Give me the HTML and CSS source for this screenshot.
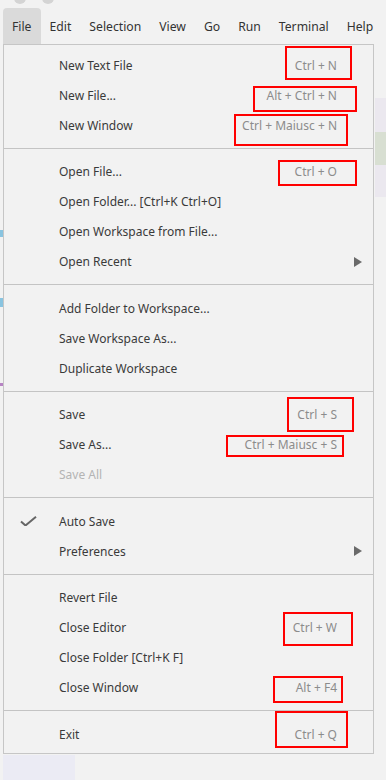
FILE: index.html
```html
<!DOCTYPE html>
<html lang="en">
<head>
  <meta charset="UTF-8" />
  <meta name="viewport" content="width=device-width, initial-scale=1.0"/>
  <title>File menu</title>
  <link rel="stylesheet" href="styles.css">
</head>
<body>
  <div class="titlebar">
    <span class="dot"></span>
    <span class="dot"></span>
  </div>

  <nav class="menubar">
    <span class="menubar-item active">File</span>
    <span class="menubar-item">Edit</span>
    <span class="menubar-item">Selection</span>
    <span class="menubar-item">View</span>
    <span class="menubar-item">Go</span>
    <span class="menubar-item">Run</span>
    <span class="menubar-item">Terminal</span>
    <span class="menubar-item">Help</span>
  </nav>

  <div class="workspace">
    <div class="gutter"></div>
    <div class="editor">
      <div class="sidebar-stub"></div>
    </div>
    <div class="minimap"></div>
  </div>

  <!-- dropdown for File -->
  <div class="dropdown">
    <div class="item"><span class="check"></span><span class="label">New Text File</span><span class="keys">Ctrl + N</span><span class="sub"></span></div>
    <div class="item"><span class="check"></span><span class="label">New File...</span><span class="keys">Alt + Ctrl + N</span><span class="sub"></span></div>
    <div class="item"><span class="check"></span><span class="label">New Window</span><span class="keys">Ctrl + Maiusc + N</span><span class="sub"></span></div>
    <div class="separator"></div>
    <div class="item"><span class="check"></span><span class="label">Open File...</span><span class="keys">Ctrl + O</span><span class="sub"></span></div>
    <div class="item"><span class="check"></span><span class="label">Open Folder... [Ctrl+K Ctrl+O]</span><span class="keys"></span><span class="sub"></span></div>
    <div class="item"><span class="check"></span><span class="label">Open Workspace from File...</span><span class="keys"></span><span class="sub"></span></div>
    <div class="item"><span class="check"></span><span class="label">Open Recent</span><span class="keys"></span><span class="sub"><span class="arrow"></span></span></div>
    <div class="separator"></div>
    <div class="item"><span class="check"></span><span class="label">Add Folder to Workspace...</span><span class="keys"></span><span class="sub"></span></div>
    <div class="item"><span class="check"></span><span class="label">Save Workspace As...</span><span class="keys"></span><span class="sub"></span></div>
    <div class="item"><span class="check"></span><span class="label">Duplicate Workspace</span><span class="keys"></span><span class="sub"></span></div>
    <div class="separator"></div>
    <div class="item"><span class="check"></span><span class="label">Save</span><span class="keys">Ctrl + S</span><span class="sub"></span></div>
    <div class="item"><span class="check"></span><span class="label">Save As...</span><span class="keys">Ctrl + Maiusc + S</span><span class="sub"></span></div>
    <div class="item disabled"><span class="check"></span><span class="label">Save All</span><span class="keys"></span><span class="sub"></span></div>
    <div class="separator"></div>
    <div class="item">
      <span class="check">
        <svg width="17" height="10" viewBox="0 0 17 10"><path d="M1 5.5 L5.5 9.5 L16 0.8" fill="none" stroke="#666" stroke-width="2"/></svg>
      </span>
      <span class="label">Auto Save</span><span class="keys"></span><span class="sub"></span>
    </div>
    <div class="item"><span class="check"></span><span class="label">Preferences</span><span class="keys"></span><span class="sub"><span class="arrow"></span></span></div>
    <div class="separator"></div>
    <div class="item"><span class="check"></span><span class="label">Revert File</span><span class="keys"></span><span class="sub"></span></div>
    <div class="item"><span class="check"></span><span class="label">Close Editor</span><span class="keys">Ctrl + W</span><span class="sub"></span></div>
    <div class="item"><span class="check"></span><span class="label">Close Folder [Ctrl+K F]</span><span class="keys"></span><span class="sub"></span></div>
    <div class="item"><span class="check"></span><span class="label">Close Window</span><span class="keys">Alt + F4</span><span class="sub"></span></div>
    <div class="separator"></div>
    <div class="item"><span class="check"></span><span class="label">Exit</span><span class="keys">Ctrl + Q</span><span class="sub"></span></div>

    <!-- red highlight boxes drawn over the shortcuts -->
    <div class="mark mark-new-text"></div>
    <div class="mark mark-new-file"></div>
    <div class="mark mark-new-window"></div>
    <div class="mark mark-open-file"></div>
    <div class="mark mark-save"></div>
    <div class="mark mark-save-as"></div>
    <div class="mark mark-close-editor"></div>
    <div class="mark mark-close-window"></div>
    <div class="mark mark-exit"></div>
  </div>
</body>
</html>
```

FILE: styles.css
```css
* {
  margin: 0;
  padding: 0;
  box-sizing: border-box;
}

body {
  width: 386px;
  height: 780px;
  overflow: hidden;
  background: #f2f2f2;
  font-family: "Noto Sans", "Open Sans", sans-serif;
  font-size: 12px;
  color: #333;
}

.titlebar {
  height: 8px;
  display: flex;
  gap: 16px;
  padding-left: 14px;
  overflow: hidden;
}

.dot {
  width: 12px;
  height: 12px;
  margin-top: -8px;
  border-radius: 50%;
  background: #d4d4d4;
}

.menubar {
  height: 36px;
  display: flex;
  align-items: stretch;
  padding-left: 3px;
}

.menubar-item {
  display: flex;
  align-items: center;
  padding: 0 9px;
  color: #333;
  font-size: 12.2px;
}

.menubar-item.active {
  background: #dadada;
  border-radius: 4px 4px 0 0;
}

/* background editor behind the menu */
.workspace {
  height: 736px;
  display: flex;
}

.gutter {
  width: 3px;
  background:
    linear-gradient(#89c4e0, #89c4e0) 0 186px / 3px 7px no-repeat,
    linear-gradient(#89c4e0, #89c4e0) 0 254px / 3px 9px no-repeat,
    linear-gradient(#b784c4, #b784c4) 0 339px / 3px 3px no-repeat;
}

.editor {
  flex: 1;
  display: flex;
  flex-direction: column;
  justify-content: flex-end;
}

.sidebar-stub {
  width: 72px;
  height: 25px;
  background: #ebebf4;
}

.minimap {
  width: 11px;
  background:
    linear-gradient(#ebe8ef, #ebe8ef) 0 54px / 11px 34px no-repeat,
    linear-gradient(#d8dfd2, #d8dfd2) 0 88px / 11px 33px no-repeat,
    linear-gradient(#ebe8ef, #ebe8ef) 0 121px / 11px 32px no-repeat;
}

/* File dropdown */
.dropdown {
  position: absolute;
  left: 3px;
  top: 44px;
  width: 371px;
  height: 710px;
  padding: 5px 0 4px;
  background: #f2f2f2;
  border: 1px solid #c6c6c6;
}

.item {
  height: 30px;
  display: flex;
  align-items: center;
  color: #3a3a3a;
}

.item.disabled {
  color: #b4b4b4;
}

.check {
  width: 55px;
  padding-left: 16px;
  display: flex;
  align-items: center;
}

.label {
  flex: 1;
  white-space: nowrap;
}

.keys {
  color: #8c8c8c;
  white-space: nowrap;
}

.sub {
  width: 36px;
  padding-left: 17px;
  display: flex;
  align-items: center;
}

.arrow {
  width: 0;
  height: 0;
  border-top: 5.5px solid transparent;
  border-bottom: 5.5px solid transparent;
  border-left: 8px solid #6a6a6a;
}

.separator {
  height: 1px;
  margin: 7.5px 0 8px;
  background: #c4c4c4;
}

.mark {
  position: absolute;
  border: 2px solid #ff0000;
}

.mark-new-text { left: 281px; top: 1px; width: 67px; height: 34px; }
.mark-new-file { left: 249px; top: 41px; width: 104px; height: 26px; }
.mark-new-window { left: 230px; top: 69px; width: 114px; height: 32px; }
.mark-open-file { left: 274px; top: 115px; width: 79px; height: 26px; }
.mark-save { left: 283px; top: 352px; width: 67px; height: 35px; }
.mark-save-as { left: 222px; top: 390px; width: 118px; height: 22px; }
.mark-close-editor { left: 279px; top: 567px; width: 70px; height: 34px; }
.mark-close-window { left: 269px; top: 631px; width: 70px; height: 27px; }
.mark-exit { left: 271px; top: 666px; width: 73px; height: 37px; }
```
